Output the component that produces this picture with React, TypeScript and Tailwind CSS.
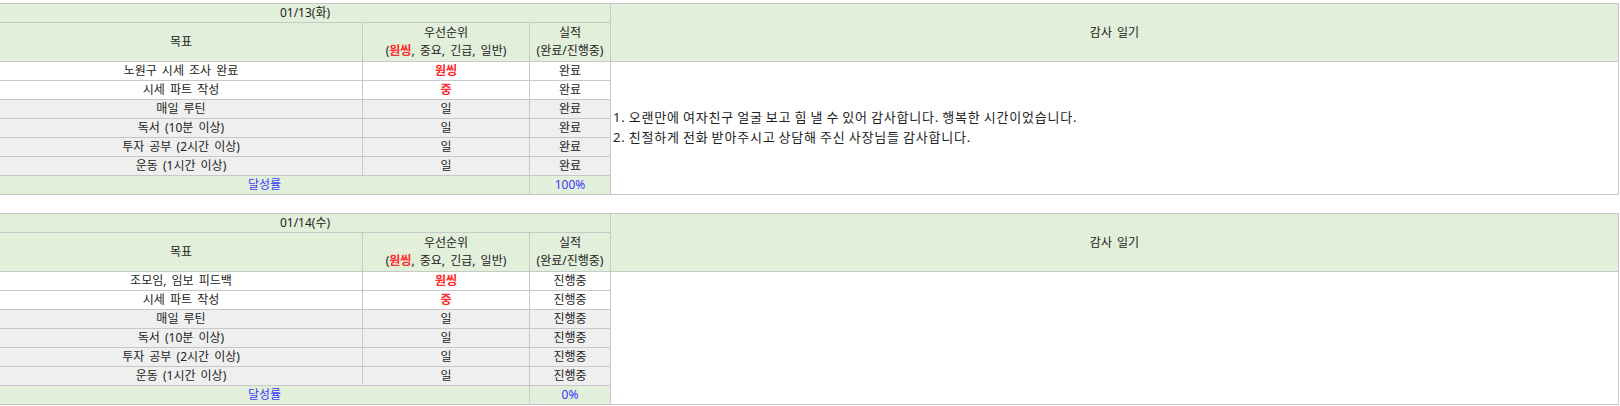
type Row = { goal: string; priority: string; hot?: boolean; result: string; gray?: boolean };

type Day = { date: string; rows: Row[]; rate: string; diary: string[] };

const days: Day[] = [
  {
    date: "01/13(화)",
    rows: [
      { goal: "노원구 시세 조사 완료", priority: "원씽", hot: true, result: "완료" },
      { goal: "시세 파트 작성", priority: "중", hot: true, result: "완료" },
      { goal: "매일 루틴", priority: "일", result: "완료", gray: true },
      { goal: "독서 (10분 이상)", priority: "일", result: "완료", gray: true },
      { goal: "투자 공부 (2시간 이상)", priority: "일", result: "완료", gray: true },
      { goal: "운동 (1시간 이상)", priority: "일", result: "완료", gray: true },
    ],
    rate: "100%",
    diary: [
      "1. 오랜만에 여자친구 얼굴 보고 힘 낼 수 있어 감사합니다. 행복한 시간이었습니다.",
      "2. 친절하게 전화 받아주시고 상담해 주신 사장님들 감사합니다.",
    ],
  },
  {
    date: "01/14(수)",
    rows: [
      { goal: "조모임, 임보 피드백", priority: "원씽", hot: true, result: "진행중" },
      { goal: "시세 파트 작성", priority: "중", hot: true, result: "진행중" },
      { goal: "매일 루틴", priority: "일", result: "진행중", gray: true },
      { goal: "독서 (10분 이상)", priority: "일", result: "진행중", gray: true },
      { goal: "투자 공부 (2시간 이상)", priority: "일", result: "진행중", gray: true },
      { goal: "운동 (1시간 이상)", priority: "일", result: "진행중", gray: true },
    ],
    rate: "0%",
    diary: [],
  },
];

function DayTable({ day }: { day: Day }) {
  const cell = "flex items-center justify-center text-center";
  return (
    <div className="-ml-px grid w-[1620px] grid-cols-[362px_166px_80px_1007px] grid-rows-[18px_38px_repeat(7,18px)] gap-px bg-[#c8c8c8] p-px">
      <div className={`${cell} col-span-3 bg-[#e2efda]`}>{day.date}</div>
      <div className={`${cell} row-span-2 bg-[#e2efda]`}>감사 일기</div>
      <div className={`${cell} bg-[#e2efda]`}>목표</div>
      <div className={`${cell} flex-col bg-[#e2efda]`}>
        <div>우선순위</div>
        <div>
          (<span className="font-bold text-[#ff2a2a]">원씽</span>, 중요, 긴급, 일반)
        </div>
      </div>
      <div className={`${cell} flex-col bg-[#e2efda]`}>
        <div>실적</div>
        <div>(완료/진행중)</div>
      </div>
      {day.rows.map((r, i) => {
        const bg = r.gray ? "bg-[#efefef]" : "bg-white";
        return (
          <div key={i} className="contents">
            <div className={`${cell} ${bg}`}>{r.goal}</div>
            <div className={`${cell} ${bg} ${r.hot ? "font-bold text-[#ff2a2a]" : ""}`}>{r.priority}</div>
            <div className={`${cell} ${bg}`}>{r.result}</div>
            {i === 0 && (
              <div className="row-span-7 flex flex-col justify-center bg-white pb-[3px] pl-[2px] text-[13px] leading-[20px] tracking-[0.8px] [word-spacing:-1px]">
                {day.diary.map((d) => (
                  <div key={d}>{d}</div>
                ))}
              </div>
            )}
          </div>
        );
      })}
      <div className={`${cell} col-span-2 bg-[#e2efda] text-[#3b3bff]`}>달성률</div>
      <div className={`${cell} bg-[#e2efda] text-[#3b3bff]`}>{day.rate}</div>
    </div>
  );
}

export default function App() {
  return (
    <div className="flex w-[1620px] flex-col gap-[18px] overflow-hidden bg-white pt-[3px] font-['Noto_Sans','Noto_Sans_CJK_KR',sans-serif] text-[12px] leading-[18px] text-[#222] [word-spacing:2px]">
      {days.map((d) => (
        <DayTable key={d.date} day={d} />
      ))}
    </div>
  );
}
